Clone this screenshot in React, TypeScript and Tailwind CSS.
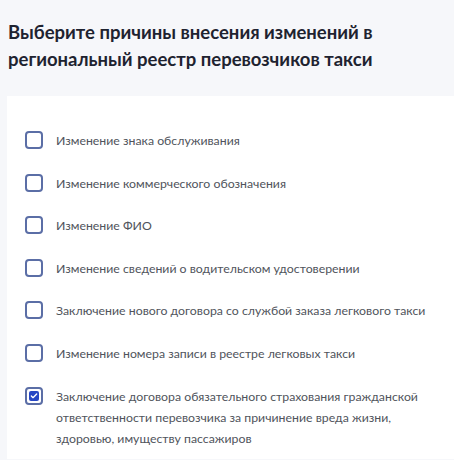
import { Check } from "lucide-react";

const REASONS = [
    { id: "sign", label: "Изменение знака обслуживания", checked: false },
    { id: "commercial", label: "Изменение коммерческого обозначения", checked: false },
    { id: "fio", label: "Изменение ФИО", checked: false },
    { id: "license", label: "Изменение сведений о водительском удостоверении", checked: false },
    { id: "contract", label: "Заключение нового договора со службой заказа легкового такси", checked: false },
    { id: "record", label: "Изменение номера записи в реестре легковых такси", checked: false },
    {
        id: "insurance",
        label: "Заключение договора обязательного страхования гражданской ответственности перевозчика за причинение вреда жизни, здоровью, имуществу пассажиров",
        checked: true,
    },
];

const Box = ({ checked }: { checked: boolean }) => (
    <div className="mt-[1px] flex h-[18px] w-[18px] shrink-0 items-center justify-center rounded-[4px] border-2 border-[#5b6ea6] bg-white">
        {checked && (
            <div className="flex h-[10px] w-[10px] items-center justify-center rounded-[2px] bg-[#2747c4]">
                <Check className="h-[8px] w-[8px] text-white" strokeWidth={4} />
            </div>
        )}
    </div>
);

export default function App() {
    return (
        <div className="min-h-[460px] w-[454px] overflow-hidden bg-[#f6f7fa] font-['Lato','Noto_Sans',sans-serif]">
            <h1 className="px-[8px] pt-[19px] text-[18.5px] font-bold leading-[27px] text-[#1e2330]">
                Выберите причины внесения изменений в региональный реестр перевозчиков такси
            </h1>
            <div className="ml-[7px] mt-[23px] bg-white pl-[18px] pr-[20px] pt-[34px] pb-[10px]">
                <ul className="flex flex-col gap-[21.6px]">
                    {REASONS.map((r) => (
                        <li key={r.id} className="flex items-start gap-[13px]">
                            <Box checked={r.checked} />
                            <span className="text-[12.3px] leading-[21px] text-[#50545c]">{r.label}</span>
                        </li>
                    ))}
                </ul>
            </div>
        </div>
    );
}
